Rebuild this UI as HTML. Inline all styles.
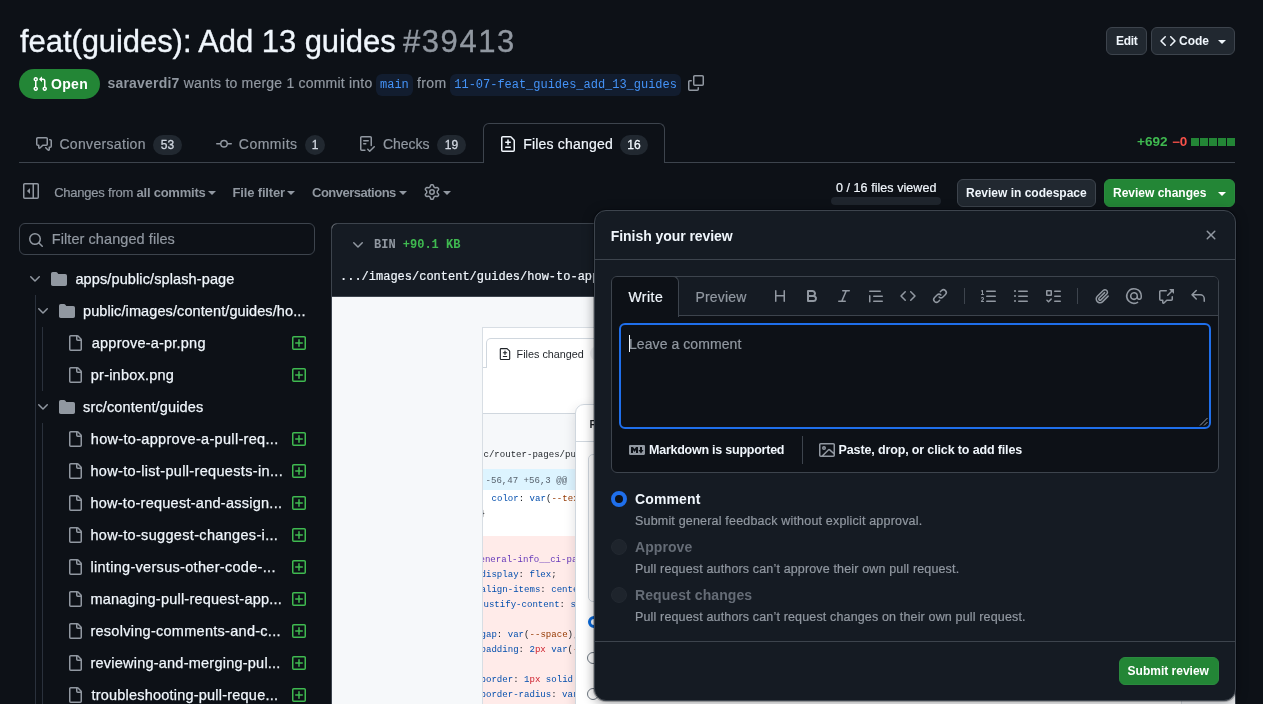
<!DOCTYPE html>
<html>
<head>
<meta charset="utf-8">
<title>feat(guides): Add 13 guides #39413</title>
<style>
*{box-sizing:border-box;margin:0;padding:0}
html,body{width:1263px;height:704px;overflow:hidden;background:#0d1117;filter:opacity(1);color:#f0f6fc;font-family:"Liberation Sans",sans-serif;font-size:14px}
.abs{position:absolute;white-space:nowrap}
.mono{font-family:"Liberation Mono",monospace}
svg{display:block;position:absolute;overflow:visible}
.muted{color:#9198a1}
.btn{position:absolute;height:28px;border:1px solid #3d444d;border-radius:6px;background:#212830;color:#f0f6fc;font-weight:bold;font-size:12px;line-height:26px;white-space:nowrap}
.counter{-webkit-text-stroke:0.3px;position:absolute;height:20px;border-radius:10px;background:#212830;color:#d1d7e0;font-size:12px;line-height:20px;text-align:center}
.tabtxt{-webkit-text-stroke:0.2px;position:absolute;font-size:14px;line-height:20px;top:134px;color:#9198a1;white-space:nowrap}
.tb{position:absolute;top:184px;font-size:13px;line-height:18px;color:#9198a1;white-space:nowrap}
.tb b{color:#9198a1}
.caret{position:absolute;width:0;height:0;border-left:4px solid transparent;border-right:4px solid transparent;border-top:4px solid #9198a1}
.row{position:absolute;left:0;height:32px;width:330px}
.row .nm{-webkit-text-stroke:0.25px;position:absolute;top:7px;font-size:14.5px;line-height:18px;color:#f0f6fc;white-space:nowrap}
</style>
</head>
<body>
<!-- ===== HEADER ===== -->
<div id="hdr">
  <div class="abs" id="title-a" style="-webkit-text-stroke:0.35px;left:20.0px;top:22px;font-size:31px;line-height:40px;color:#f0f6fc;letter-spacing:-0.069px">feat(guides): Add 13 guides</div>
  <div class="abs" id="title-b" style="-webkit-text-stroke:0.35px;left:403.0px;top:22px;font-size:31px;line-height:40px;color:#9198a1;letter-spacing:1.560px">#39413</div>
  <div class="btn" style="left:1106px;top:27px;width:41px"><span class="abs" id="x-edit" style="left:9.0px;top:0;letter-spacing:-0.333px">Edit</span></div>
  <div class="btn" id="b-code" style="left:1151px;top:27px;width:84px">
    <svg style="left:8px;top:5px" width="16" height="16" viewBox="0 0 16 16" fill="#f0f6fc"><path d="m11.28 3.22 4.25 4.25a.75.75 0 0 1 0 1.06l-4.25 4.25a.749.749 0 0 1-1.275-.326.749.749 0 0 1 .215-.734L13.94 8l-3.72-3.72a.749.749 0 0 1 .326-1.275.749.749 0 0 1 .734.215Zm-6.56 0a.751.751 0 0 1 1.042.018.751.751 0 0 1 .018 1.042L2.06 8l3.72 3.72a.749.749 0 0 1-.326 1.275.749.749 0 0 1-.734-.215L.47 8.530a.75.75 0 0 1 0-1.06Z"/></svg>
    <span class="abs" id="x-code" style="left:27.0px;top:0;letter-spacing:-0.000px">Code</span>
    <div class="caret" style="left:66px;top:12px;border-top-color:#f0f6fc"></div>
  </div>
  <!-- Open badge -->
  <div class="abs" id="open" style="left:19px;top:69px;width:81px;height:30px;border-radius:15px;background:#238636">
    <svg style="left:13px;top:7px" width="16" height="16" viewBox="0 0 16 16" fill="#fff"><path d="M1.5 3.25a2.25 2.25 0 1 1 3 2.122v5.256a2.251 2.251 0 1 1-1.500 0V5.372A2.250 2.250 0 0 1 1.500 3.250Zm5.677-.177L9.573.677A.25.25 0 0 1 10 .854V2.500h1A2.500 2.500 0 0 1 13.500 5v5.628a2.251 2.251 0 1 1-1.500 0V5a1 1 0 0 0-1-1h-1v1.646a.25.25 0 0 1-.427.177L7.177 3.427a.25.25 0 0 1 0-.354ZM3.750 2.500a.75.75 0 1 0 0 1.500.75.75 0 0 0 0-1.500Zm0 9.500a.75.75 0 1 0 0 1.500.75.75 0 0 0 0-1.500Zm8.250.75a.75.75 0 1 0 1.500 0 .75.75 0 0 0-1.500 0Z"/></svg>
    <span class="abs" id="x-open" style="left:32.0px;top:6px;font-size:14px;line-height:18px;font-weight:bold;color:#fff;letter-spacing:0.333px">Open</span>
  </div>
  <div class="abs muted" id="meta" style="-webkit-text-stroke:0.2px;left:107.4px;top:73px;font-size:14px;line-height:20px;letter-spacing:0.211px"><b style="-webkit-text-stroke:0">saraverdi7</b> wants to merge 1 commit into</div>
  <div class="abs mono" id="br1" style="left:376px;top:74px;height:21.5px;padding:0 4px;border-radius:6px;background:#121d2f;color:#4493f8;font-size:12px;line-height:23.4px;letter-spacing:0px">main</div>
  <div class="abs muted" id="from" style="-webkit-text-stroke:0.2px;left:417.0px;top:73px;font-size:14px;line-height:20px;letter-spacing:0.402px">from</div>
  <div class="abs mono" id="br2" style="left:450px;top:74px;height:21.5px;padding:0 4.3px;border-radius:6px;background:#121d2f;color:#4493f8;font-size:12px;line-height:23.4px;letter-spacing:-0.021px">11-07-feat_guides_add_13_guides</div>
  <svg id="copy" style="left:688px;top:75px" width="16" height="16" viewBox="0 0 16 16" fill="#9198a1"><path d="M0 6.750C0 5.784.784 5 1.750 5h1.500a.75.75 0 0 1 0 1.500h-1.500a.25.25 0 0 0-.25.25v7.500c0 .138.112.25.25.25h7.500a.25.25 0 0 0 .25-.25v-1.500a.75.75 0 0 1 1.500 0v1.500A1.750 1.750 0 0 1 9.250 16h-7.500A1.750 1.750 0 0 1 0 14.250Z"/><path d="M5 1.750C5 .784 5.784 0 6.750 0h7.500C15.216 0 16 .784 16 1.750v7.500A1.750 1.750 0 0 1 14.250 11h-7.500A1.750 1.750 0 0 1 5 9.250Zm1.750-.25a.25.25 0 0 0-.25.25v7.500c0 .138.112.25.25.25h7.500a.25.25 0 0 0 .25-.25v-7.500a.25.25 0 0 0-.25-.25Z"/></svg>
</div>

<!-- ===== TABS ===== -->
<div id="tabs">
  <div class="abs" style="left:19px;top:162px;width:1216px;height:1px;background:#3d444d"></div>
  <svg style="left:36px;top:136px" width="16" height="16" viewBox="0 0 16 16" fill="#9198a1"><path d="M1.750 1h8.500c.966 0 1.750.784 1.750 1.750v5.500A1.750 1.750 0 0 1 10.250 10H7.061l-2.574 2.573A1.458 1.458 0 0 1 2 11.543V10h-.25A1.750 1.750 0 0 1 0 8.250v-5.500C0 1.784.784 1 1.750 1ZM1.500 2.750v5.500c0 .138.112.25.25.25h1a.75.75 0 0 1 .75.75v2.190l2.720-2.720a.749.749 0 0 1 .53-.22h3.500a.25.25 0 0 0 .25-.25v-5.500a.25.25 0 0 0-.25-.25h-8.500a.25.25 0 0 0-.25.25Zm13 2a.25.25 0 0 0-.25-.25h-.5a.75.75 0 0 1 0-1.500h.5c.966 0 1.750.784 1.750 1.750v5.500A1.750 1.750 0 0 1 14.250 12H14v1.543a1.458 1.458 0 0 1-2.487 1.030L9.220 12.280a.749.749 0 0 1 .326-1.275.749.749 0 0 1 .734.215l2.220 2.220v-2.190a.75.75 0 0 1 .75-.75h1a.25.25 0 0 0 .25-.25Z"/></svg>
  <div class="tabtxt" id="t1" style="left:59.4px;letter-spacing:0.329px">Conversation</div>
  <div class="counter" style="left:153px;top:135px;width:29px">53</div>
  <svg style="left:216px;top:136px" width="16" height="16" viewBox="0 0 16 16" fill="#9198a1"><path d="M11.930 8.500a4.002 4.002 0 0 1-7.860 0H.750a.75.75 0 0 1 0-1.500h3.320a4.002 4.002 0 0 1 7.860 0h3.320a.75.75 0 0 1 0 1.500Zm-1.430-.75a2.500 2.500 0 1 0-5 0 2.500 2.500 0 0 0 5 0Z"/></svg>
  <div class="tabtxt" id="t2" style="left:238.8px;letter-spacing:0.500px">Commits</div>
  <div class="counter" style="left:305px;top:135px;width:20px">1</div>
  <svg style="left:359px;top:136px" width="16" height="16" viewBox="0 0 16 16" fill="#9198a1"><path d="M2.500 1.750v11.500c0 .138.112.25.25.25h3.170a.75.75 0 0 1 0 1.500H2.750A1.750 1.750 0 0 1 1 13.250V1.750C1 .784 1.784 0 2.750 0h8.500C12.216 0 13 .784 13 1.750v7.736a.75.75 0 0 1-1.500 0V1.750a.25.25 0 0 0-.25-.25h-8.500a.25.25 0 0 0-.25.250Zm13.274 9.537v-.001l-4.557 4.450a.75.75 0 0 1-1.055-.008l-1.943-1.950a.75.75 0 0 1 1.062-1.058l1.419 1.425 4.026-3.932a.75.75 0 1 1 1.048 1.074ZM4.750 4h4.500a.75.75 0 0 1 0 1.500h-4.500a.75.75 0 0 1 0-1.500ZM4 7.750A.75.75 0 0 1 4.750 7h2a.75.75 0 0 1 0 1.500h-2A.75.75 0 0 1 4 7.750Z"/></svg>
  <div class="tabtxt" id="t3" style="left:383.0px;letter-spacing:-0.040px">Checks</div>
  <div class="counter" style="left:437px;top:135px;width:29px">19</div>
  <!-- selected tab -->
  <div class="abs" id="seltab" style="left:483px;top:123px;width:182px;height:40px;border:1px solid #3d444d;border-bottom:none;border-radius:6px 6px 0 0;background:#0d1117"></div>
  <svg style="left:500px;top:136px" width="16" height="16" viewBox="0 0 16 16" fill="#f0f6fc"><path d="M1 1.750C1 .784 1.784 0 2.750 0h7.586c.464 0 .909.184 1.237.513l2.914 2.914c.329.328.513.773.513 1.237v9.586A1.750 1.750 0 0 1 13.250 16H2.750A1.750 1.750 0 0 1 1 14.250Zm1.750-.25a.25.25 0 0 0-.25.25v12.500c0 .138.112.25.25.25h10.500a.25.25 0 0 0 .25-.25V4.664a.25.25 0 0 0-.073-.177l-2.914-2.914a.25.25 0 0 0-.177-.073ZM8 3.250a.75.75 0 0 1 .75.75v1.500h1.500a.75.75 0 0 1 0 1.500h-1.500v1.500a.75.75 0 0 1-1.500 0V7h-1.500a.75.75 0 0 1 0-1.500h1.500V4A.75.75 0 0 1 8 3.250Zm-3 8a.75.75 0 0 1 .75-.75h4.500a.75.75 0 0 1 0 1.500h-4.500a.75.75 0 0 1-.75-.75Z"/></svg>
  <div class="tabtxt" id="t4" style="left:523.2px;color:#f0f6fc;letter-spacing:0.201px">Files changed</div>
  <div class="counter" style="left:620px;top:135px;width:28px;color:#f0f6fc">16</div>
  <!-- diffstat -->
  <div class="abs" id="dsp" style="left:1136.5px;top:133px;font-size:12px;line-height:18px;font-weight:bold;color:#3fb950;transform:scaleX(1.13);transform-origin:0 0">+692</div>
  <div class="abs" id="dsm" style="left:1171.5px;top:133px;font-size:12px;line-height:18px;font-weight:bold;color:#f85149;transform:scaleX(1.12);transform-origin:0 0">&minus;0</div>
  <div class="abs" style="left:1191px;top:138px;width:8px;height:8px;background:#238636;box-shadow:9px 0 0 #238636,18px 0 0 #238636,27px 0 0 #238636,36px 0 0 #238636"></div>
</div>

<!-- ===== TOOLBAR ===== -->
<div id="toolbar">
  <svg style="left:23px;top:183px" width="16" height="16" viewBox="0 0 16 16" fill="#9198a1"><path d="M4.177 7.823 6.573 5.427A.25.25 0 0 1 7 5.604v4.792a.25.25 0 0 1-.427.177L4.177 8.177a.25.25 0 0 1 0-.354Z"/><path d="M1.750 0h12.500C15.216 0 16 .784 16 1.750v12.500A1.750 1.750 0 0 1 14.250 16H1.750A1.750 1.750 0 0 1 0 14.250V1.750C0 .784.784 0 1.750 0ZM1.500 1.750v12.500c0 .138.112.25.25.25H9.500v-13H1.750a.25.25 0 0 0-.25.25ZM11 14.500h3.250a.25.25 0 0 0 .25-.25V1.750a.25.25 0 0 0-.25-.25H11Z"/></svg>
  <div class="tb" id="tb1" style="left:54.2px;letter-spacing:-0.228px"><span style="-webkit-text-stroke:0.2px">Changes from </span><b>all commits</b></div>
  <div class="caret" style="left:208px;top:191px"></div>
  <div class="tb" id="tb2" style="left:232.4px;letter-spacing:-0.140px"><b>File filter</b></div>
  <div class="caret" style="left:287px;top:191px"></div>
  <div class="tb" id="tb3" style="left:312.0px;letter-spacing:-0.500px"><b>Conversations</b></div>
  <div class="caret" style="left:399px;top:191px"></div>
  <svg style="left:424px;top:184px" width="16" height="16" viewBox="0 0 16 16" fill="#9198a1"><path d="M8 0a8.200 8.200 0 0 1 .701.031C9.444.095 9.990.645 10.160 1.290l.288 1.107c.018.066.079.158.212.224.231.114.454.243.668.386.123.082.233.090.299.071l1.103-.303c.644-.176 1.392.021 1.820.630.270.385.506.792.704 1.218.315.675.111 1.422-.364 1.891l-.814.806c-.049.048-.098.147-.088.294.016.257.016.515 0 .772-.010.147.038.246.088.294l.814.806c.475.469.679 1.216.364 1.891a7.977 7.977 0 0 1-.704 1.217c-.428.610-1.176.807-1.820.630l-1.102-.302c-.067-.019-.177-.011-.300.071a5.909 5.909 0 0 1-.668.386c-.133.066-.194.158-.211.224l-.290 1.106c-.168.646-.715 1.196-1.458 1.260a8.006 8.006 0 0 1-1.402 0c-.743-.064-1.289-.614-1.458-1.260l-.289-1.106c-.018-.066-.079-.158-.212-.224a5.738 5.738 0 0 1-.668-.386c-.123-.082-.233-.090-.299-.071l-1.103.303c-.644.176-1.392-.021-1.820-.630a8.120 8.120 0 0 1-.704-1.218c-.315-.675-.111-1.422.363-1.891l.815-.806c.050-.048.098-.147.088-.294a6.214 6.214 0 0 1 0-.772c.010-.147-.038-.246-.088-.294l-.815-.806C.635 6.045.431 5.298.746 4.623a7.920 7.920 0 0 1 .704-1.217c.428-.610 1.176-.807 1.820-.630l1.102.302c.067.019.177.011.300-.071.214-.143.437-.272.668-.386.133-.066.194-.158.211-.224l.290-1.106C6.009.645 6.556.095 7.299.030 7.530.010 7.764 0 8 0Zm-.571 1.525c-.036.003-.108.036-.137.146l-.289 1.105c-.147.561-.549.967-.998 1.189-.173.086-.340.183-.500.290-.417.278-.970.423-1.529.270l-1.103-.303c-.109-.030-.175.016-.195.045-.220.312-.412.644-.573.990-.014.031-.021.110.059.190l.815.806c.411.406.562.957.530 1.456a4.709 4.709 0 0 0 0 .582c.032.499-.119 1.050-.530 1.456l-.815.806c-.081.080-.073.159-.059.190.162.346.353.677.573.989.020.030.085.076.195.046l1.102-.303c.560-.153 1.113-.008 1.530.270.161.107.328.204.501.290.447.222.850.629.997 1.189l.289 1.105c.029.109.101.143.137.146a6.600 6.600 0 0 0 1.142 0c.036-.003.108-.036.137-.146l.289-1.105c.147-.561.549-.967.998-1.189.173-.086.340-.183.500-.290.417-.278.970-.423 1.529-.270l1.103.303c.109.029.175-.016.195-.045.220-.313.411-.644.573-.990.014-.031.021-.110-.059-.190l-.815-.806c-.411-.406-.562-.957-.530-1.456a4.709 4.709 0 0 0 0-.582c-.032-.499.119-1.050.530-1.456l.815-.806c.081-.080.073-.159.059-.190a6.464 6.464 0 0 0-.573-.989c-.020-.030-.085-.076-.195-.046l-1.102.303c-.560.153-1.113.008-1.530-.270a4.440 4.440 0 0 0-.501-.290c-.447-.222-.850-.629-.997-1.189l-.289-1.105c-.029-.110-.101-.143-.137-.146a6.600 6.600 0 0 0-1.142 0ZM11 8a3 3 0 1 1-6 0 3 3 0 0 1 6 0ZM9.500 8a1.500 1.500 0 1 0-3.001.001A1.500 1.500 0 0 0 9.500 8Z"/></svg>
  <div class="caret" style="left:443px;top:191px"></div>
  <div class="abs" id="fv" style="-webkit-text-stroke:0.2px;left:836.0px;top:179px;font-size:12.5px;line-height:18px;color:#f0f6fc;letter-spacing:0.055px">0 / 16 files viewed</div>
  <div class="abs" style="left:831px;top:197px;width:110px;height:8px;border-radius:4px;background:#1f252d"></div>
  <div class="btn" style="left:957px;top:179px;width:139px"><span class="abs" id="x-rc" style="left:8.0px;top:0;letter-spacing:0.000px">Review in codespace</span></div>
  <div class="btn" id="b-rv" style="left:1104px;top:179px;width:131px;background:#238636;border-color:#2a8a3e;color:#fff"><span class="abs" id="x-rv" style="left:8.0px;top:0;letter-spacing:0.000px">Review changes</span><div class="caret" style="left:113px;top:12px;border-top-color:#fff"></div></div>
</div>

<!-- ===== FILE TREE ===== -->
<div id="tree">
  <div class="abs" style="left:19px;top:223px;width:296px;height:32px;border:1px solid #3d444d;border-radius:6px;background:#0d1117"></div>
  <svg style="left:27.5px;top:231.5px" width="16" height="16" viewBox="0 0 16 16" fill="#9198a1"><path d="M10.680 11.740a6 6 0 0 1-7.922-8.982 6 6 0 0 1 8.982 7.922l3.040 3.040a.749.749 0 0 1-.326 1.275.749.749 0 0 1-.734-.215ZM11.500 7a4.499 4.499 0 1 0-8.997 0A4.499 4.499 0 0 0 11.500 7Z"/></svg>
  <div class="abs" id="flt" style="-webkit-text-stroke:0.2px;left:51.8px;top:229px;font-size:14.5px;line-height:20px;color:#9198a1;letter-spacing:0.072px">Filter changed files</div>
  <div class="abs" style="left:35px;top:295px;width:1px;height:420px;background:#2a313c"></div>
  <div class="abs" style="left:42px;top:327px;width:1px;height:64px;background:#2a313c"></div>
  <div class="abs" style="left:42px;top:423px;width:1px;height:290px;background:#2a313c"></div>
  <div class="row" style="top:263px"><svg style="left:27px;top:8px" width="16" height="16" viewBox="0 0 16 16" fill="#9198a1"><path d="M12.780 5.220a.749.749 0 0 1 0 1.060l-4.250 4.250a.749.749 0 0 1-1.060 0L3.220 6.280a.749.749 0 1 1 1.060-1.060L8 8.939l3.720-3.719a.749.749 0 0 1 1.060 0Z"/></svg><svg style="left:51px;top:8px" width="16" height="16" viewBox="0 0 16 16" fill="#9198a1"><path d="M1.750 1A1.750 1.750 0 0 0 0 2.750v10.500C0 14.216.784 15 1.750 15h12.500A1.750 1.750 0 0 0 16 13.250v-8.500A1.750 1.750 0 0 0 14.250 3H7.500a.25.25 0 0 1-.2-.1l-.9-1.200C6.070 1.260 5.550 1 5 1H1.750Z"/></svg><span class="nm" id="r0" style="left:75.4px;letter-spacing:0.117px">apps/public/splash-page</span></div>
  <div class="row" style="top:295px"><svg style="left:35px;top:8px" width="16" height="16" viewBox="0 0 16 16" fill="#9198a1"><path d="M12.780 5.220a.749.749 0 0 1 0 1.060l-4.250 4.250a.749.749 0 0 1-1.060 0L3.220 6.280a.749.749 0 1 1 1.060-1.060L8 8.939l3.720-3.719a.749.749 0 0 1 1.060 0Z"/></svg><svg style="left:59px;top:8px" width="16" height="16" viewBox="0 0 16 16" fill="#9198a1"><path d="M1.750 1A1.750 1.750 0 0 0 0 2.750v10.500C0 14.216.784 15 1.750 15h12.500A1.750 1.750 0 0 0 16 13.250v-8.500A1.750 1.750 0 0 0 14.250 3H7.500a.25.25 0 0 1-.2-.1l-.9-1.200C6.070 1.260 5.550 1 5 1H1.750Z"/></svg><span class="nm" id="r1" style="left:83.0px;letter-spacing:0.097px">public/images/content/guides/ho...</span></div>
  <div class="row" style="top:327px"><svg style="left:67px;top:8px" width="16" height="16" viewBox="0 0 16 16" fill="#9198a1"><path d="M2 1.750C2 .784 2.784 0 3.750 0h6.586c.464 0 .909.184 1.237.513l2.914 2.914c.329.328.513.773.513 1.237v9.586A1.750 1.750 0 0 1 13.250 16h-9.500A1.750 1.750 0 0 1 2 14.250Zm1.750-.25a.25.25 0 0 0-.25.25v12.500c0 .138.112.25.25.25h9.500a.25.25 0 0 0 .25-.25V6h-2.750A1.750 1.750 0 0 1 9 4.250V1.500Zm6.750.062V4.250c0 .138.112.25.25.25h2.688l-.011-.013-2.914-2.914-.013-.011Z"/></svg><span class="nm" id="r2" style="left:91.8px;letter-spacing:0.215px">approve-a-pr.png</span><svg style="left:291px;top:8px" width="16" height="16" viewBox="0 0 16 16" fill="#3fb950"><path d="M2.750 1h10.500c.966 0 1.750.784 1.750 1.750v10.500A1.750 1.750 0 0 1 13.250 15H2.750A1.750 1.750 0 0 1 1 13.250V2.750C1 1.784 1.784 1 2.750 1Zm10.500 1.500H2.750a.25.25 0 0 0-.25.25v10.500c0 .138.112.25.25.25h10.500a.25.25 0 0 0 .25-.25V2.750a.25.25 0 0 0-.25-.25ZM8 4a.75.75 0 0 1 .75.75v2.500h2.500a.75.75 0 0 1 0 1.500h-2.500v2.500a.75.75 0 0 1-1.500 0v-2.500h-2.500a.75.75 0 0 1 0-1.500h2.500v-2.500A.75.75 0 0 1 8 4Z"/></svg></div>
  <div class="row" style="top:359px"><svg style="left:67px;top:8px" width="16" height="16" viewBox="0 0 16 16" fill="#9198a1"><path d="M2 1.750C2 .784 2.784 0 3.750 0h6.586c.464 0 .909.184 1.237.513l2.914 2.914c.329.328.513.773.513 1.237v9.586A1.750 1.750 0 0 1 13.250 16h-9.500A1.750 1.750 0 0 1 2 14.250Zm1.750-.25a.25.25 0 0 0-.25.25v12.500c0 .138.112.25.25.25h9.500a.25.25 0 0 0 .25-.25V6h-2.750A1.750 1.750 0 0 1 9 4.250V1.500Zm6.750.062V4.250c0 .138.112.25.25.25h2.688l-.011-.013-2.914-2.914-.013-.011Z"/></svg><span class="nm" id="r3" style="left:90.8px;letter-spacing:0.220px">pr-inbox.png</span><svg style="left:291px;top:8px" width="16" height="16" viewBox="0 0 16 16" fill="#3fb950"><path d="M2.750 1h10.500c.966 0 1.750.784 1.750 1.750v10.500A1.750 1.750 0 0 1 13.250 15H2.750A1.750 1.750 0 0 1 1 13.250V2.750C1 1.784 1.784 1 2.750 1Zm10.500 1.500H2.750a.25.25 0 0 0-.25.25v10.500c0 .138.112.25.25.25h10.500a.25.25 0 0 0 .25-.25V2.750a.25.25 0 0 0-.25-.25ZM8 4a.75.75 0 0 1 .75.75v2.500h2.500a.75.75 0 0 1 0 1.500h-2.500v2.500a.75.75 0 0 1-1.500 0v-2.500h-2.500a.75.75 0 0 1 0-1.500h2.500v-2.500A.75.75 0 0 1 8 4Z"/></svg></div>
  <div class="row" style="top:391px"><svg style="left:35px;top:8px" width="16" height="16" viewBox="0 0 16 16" fill="#9198a1"><path d="M12.780 5.220a.749.749 0 0 1 0 1.060l-4.250 4.250a.749.749 0 0 1-1.060 0L3.220 6.280a.749.749 0 1 1 1.060-1.060L8 8.939l3.720-3.719a.749.749 0 0 1 1.060 0Z"/></svg><svg style="left:59px;top:8px" width="16" height="16" viewBox="0 0 16 16" fill="#9198a1"><path d="M1.750 1A1.750 1.750 0 0 0 0 2.750v10.500C0 14.216.784 15 1.750 15h12.500A1.750 1.750 0 0 0 16 13.250v-8.500A1.750 1.750 0 0 0 14.250 3H7.500a.25.25 0 0 1-.2-.1l-.9-1.200C6.070 1.260 5.550 1 5 1H1.750Z"/></svg><span class="nm" id="r4" style="left:83.0px;letter-spacing:0.152px">src/content/guides</span></div>
  <div class="row" style="top:423px"><svg style="left:67px;top:8px" width="16" height="16" viewBox="0 0 16 16" fill="#9198a1"><path d="M2 1.750C2 .784 2.784 0 3.750 0h6.586c.464 0 .909.184 1.237.513l2.914 2.914c.329.328.513.773.513 1.237v9.586A1.750 1.750 0 0 1 13.250 16h-9.500A1.750 1.750 0 0 1 2 14.250Zm1.750-.25a.25.25 0 0 0-.25.25v12.500c0 .138.112.25.25.25h9.500a.25.25 0 0 0 .25-.25V6h-2.750A1.750 1.750 0 0 1 9 4.250V1.500Zm6.750.062V4.250c0 .138.112.25.25.25h2.688l-.011-.013-2.914-2.914-.013-.011Z"/></svg><span class="nm" id="r5" style="left:90.8px;letter-spacing:0.314px">how-to-approve-a-pull-req...</span><svg style="left:291px;top:8px" width="16" height="16" viewBox="0 0 16 16" fill="#3fb950"><path d="M2.750 1h10.500c.966 0 1.750.784 1.750 1.750v10.500A1.750 1.750 0 0 1 13.250 15H2.750A1.750 1.750 0 0 1 1 13.250V2.750C1 1.784 1.784 1 2.750 1Zm10.500 1.500H2.750a.25.25 0 0 0-.25.25v10.500c0 .138.112.25.25.25h10.500a.25.25 0 0 0 .25-.25V2.750a.25.25 0 0 0-.25-.25ZM8 4a.75.75 0 0 1 .75.75v2.500h2.500a.75.75 0 0 1 0 1.500h-2.500v2.500a.75.75 0 0 1-1.500 0v-2.500h-2.500a.75.75 0 0 1 0-1.500h2.500v-2.500A.75.75 0 0 1 8 4Z"/></svg></div>
  <div class="row" style="top:455px"><svg style="left:67px;top:8px" width="16" height="16" viewBox="0 0 16 16" fill="#9198a1"><path d="M2 1.750C2 .784 2.784 0 3.750 0h6.586c.464 0 .909.184 1.237.513l2.914 2.914c.329.328.513.773.513 1.237v9.586A1.750 1.750 0 0 1 13.250 16h-9.500A1.750 1.750 0 0 1 2 14.250Zm1.750-.25a.25.25 0 0 0-.25.25v12.500c0 .138.112.25.25.25h9.500a.25.25 0 0 0 .25-.25V6h-2.750A1.750 1.750 0 0 1 9 4.250V1.500Zm6.750.062V4.250c0 .138.112.25.25.25h2.688l-.011-.013-2.914-2.914-.013-.011Z"/></svg><span class="nm" id="r6" style="left:90.4px;letter-spacing:0.341px">how-to-list-pull-requests-in...</span><svg style="left:291px;top:8px" width="16" height="16" viewBox="0 0 16 16" fill="#3fb950"><path d="M2.750 1h10.500c.966 0 1.750.784 1.750 1.750v10.500A1.750 1.750 0 0 1 13.250 15H2.750A1.750 1.750 0 0 1 1 13.250V2.750C1 1.784 1.784 1 2.750 1Zm10.500 1.500H2.750a.25.25 0 0 0-.25.25v10.500c0 .138.112.25.25.25h10.500a.25.25 0 0 0 .25-.25V2.750a.25.25 0 0 0-.25-.25ZM8 4a.75.75 0 0 1 .75.75v2.500h2.500a.75.75 0 0 1 0 1.500h-2.500v2.500a.75.75 0 0 1-1.500 0v-2.500h-2.500a.75.75 0 0 1 0-1.500h2.500v-2.500A.75.75 0 0 1 8 4Z"/></svg></div>
  <div class="row" style="top:487px"><svg style="left:67px;top:8px" width="16" height="16" viewBox="0 0 16 16" fill="#9198a1"><path d="M2 1.750C2 .784 2.784 0 3.750 0h6.586c.464 0 .909.184 1.237.513l2.914 2.914c.329.328.513.773.513 1.237v9.586A1.750 1.750 0 0 1 13.250 16h-9.500A1.750 1.750 0 0 1 2 14.250Zm1.750-.25a.25.25 0 0 0-.25.25v12.500c0 .138.112.25.25.25h9.500a.25.25 0 0 0 .25-.25V6h-2.750A1.750 1.750 0 0 1 9 4.250V1.500Zm6.750.062V4.250c0 .138.112.25.25.25h2.688l-.011-.013-2.914-2.914-.013-.011Z"/></svg><span class="nm" id="r7" style="left:90.4px;letter-spacing:0.260px">how-to-request-and-assign...</span><svg style="left:291px;top:8px" width="16" height="16" viewBox="0 0 16 16" fill="#3fb950"><path d="M2.750 1h10.500c.966 0 1.750.784 1.750 1.750v10.500A1.750 1.750 0 0 1 13.250 15H2.750A1.750 1.750 0 0 1 1 13.250V2.750C1 1.784 1.784 1 2.750 1Zm10.500 1.500H2.750a.25.25 0 0 0-.25.25v10.500c0 .138.112.25.25.25h10.500a.25.25 0 0 0 .25-.25V2.750a.25.25 0 0 0-.25-.25ZM8 4a.75.75 0 0 1 .75.75v2.500h2.500a.75.75 0 0 1 0 1.500h-2.500v2.500a.75.75 0 0 1-1.500 0v-2.500h-2.500a.75.75 0 0 1 0-1.500h2.500v-2.500A.75.75 0 0 1 8 4Z"/></svg></div>
  <div class="row" style="top:519px"><svg style="left:67px;top:8px" width="16" height="16" viewBox="0 0 16 16" fill="#9198a1"><path d="M2 1.750C2 .784 2.784 0 3.750 0h6.586c.464 0 .909.184 1.237.513l2.914 2.914c.329.328.513.773.513 1.237v9.586A1.750 1.750 0 0 1 13.250 16h-9.500A1.750 1.750 0 0 1 2 14.250Zm1.750-.25a.25.25 0 0 0-.25.25v12.500c0 .138.112.25.25.25h9.500a.25.25 0 0 0 .25-.25V6h-2.750A1.750 1.750 0 0 1 9 4.250V1.500Zm6.750.062V4.250c0 .138.112.25.25.25h2.688l-.011-.013-2.914-2.914-.013-.011Z"/></svg><span class="nm" id="r8" style="left:90.4px;letter-spacing:0.330px">how-to-suggest-changes-i...</span><svg style="left:291px;top:8px" width="16" height="16" viewBox="0 0 16 16" fill="#3fb950"><path d="M2.750 1h10.500c.966 0 1.750.784 1.750 1.750v10.500A1.750 1.750 0 0 1 13.250 15H2.750A1.750 1.750 0 0 1 1 13.250V2.750C1 1.784 1.784 1 2.750 1Zm10.500 1.500H2.750a.25.25 0 0 0-.25.25v10.500c0 .138.112.25.25.25h10.500a.25.25 0 0 0 .25-.25V2.750a.25.25 0 0 0-.25-.25ZM8 4a.75.75 0 0 1 .75.75v2.500h2.500a.75.75 0 0 1 0 1.500h-2.500v2.500a.75.75 0 0 1-1.500 0v-2.500h-2.500a.75.75 0 0 1 0-1.500h2.500v-2.500A.75.75 0 0 1 8 4Z"/></svg></div>
  <div class="row" style="top:551px"><svg style="left:67px;top:8px" width="16" height="16" viewBox="0 0 16 16" fill="#9198a1"><path d="M2 1.750C2 .784 2.784 0 3.750 0h6.586c.464 0 .909.184 1.237.513l2.914 2.914c.329.328.513.773.513 1.237v9.586A1.750 1.750 0 0 1 13.250 16h-9.500A1.750 1.750 0 0 1 2 14.250Zm1.750-.25a.25.25 0 0 0-.25.25v12.500c0 .138.112.25.25.25h9.500a.25.25 0 0 0 .25-.25V6h-2.750A1.750 1.750 0 0 1 9 4.250V1.500Zm6.750.062V4.250c0 .138.112.25.25.25h2.688l-.011-.013-2.914-2.914-.013-.011Z"/></svg><span class="nm" id="r9" style="left:90.4px;letter-spacing:0.306px">linting-versus-other-code-...</span><svg style="left:291px;top:8px" width="16" height="16" viewBox="0 0 16 16" fill="#3fb950"><path d="M2.750 1h10.500c.966 0 1.750.784 1.750 1.750v10.500A1.750 1.750 0 0 1 13.250 15H2.750A1.750 1.750 0 0 1 1 13.250V2.750C1 1.784 1.784 1 2.750 1Zm10.500 1.500H2.750a.25.25 0 0 0-.25.25v10.500c0 .138.112.25.25.25h10.500a.25.25 0 0 0 .25-.25V2.750a.25.25 0 0 0-.25-.25ZM8 4a.75.75 0 0 1 .75.75v2.500h2.500a.75.75 0 0 1 0 1.500h-2.500v2.500a.75.75 0 0 1-1.500 0v-2.500h-2.500a.75.75 0 0 1 0-1.500h2.500v-2.500A.75.75 0 0 1 8 4Z"/></svg></div>
  <div class="row" style="top:583px"><svg style="left:67px;top:8px" width="16" height="16" viewBox="0 0 16 16" fill="#9198a1"><path d="M2 1.750C2 .784 2.784 0 3.750 0h6.586c.464 0 .909.184 1.237.513l2.914 2.914c.329.328.513.773.513 1.237v9.586A1.750 1.750 0 0 1 13.250 16h-9.500A1.750 1.750 0 0 1 2 14.250Zm1.750-.25a.25.25 0 0 0-.25.25v12.500c0 .138.112.25.25.25h9.500a.25.25 0 0 0 .25-.25V6h-2.750A1.750 1.750 0 0 1 9 4.250V1.500Zm6.750.062V4.250c0 .138.112.25.25.25h2.688l-.011-.013-2.914-2.914-.013-.011Z"/></svg><span class="nm" id="r10" style="left:90.4px;letter-spacing:0.222px">managing-pull-request-app...</span><svg style="left:291px;top:8px" width="16" height="16" viewBox="0 0 16 16" fill="#3fb950"><path d="M2.750 1h10.500c.966 0 1.750.784 1.750 1.750v10.500A1.750 1.750 0 0 1 13.250 15H2.750A1.750 1.750 0 0 1 1 13.250V2.750C1 1.784 1.784 1 2.750 1Zm10.500 1.500H2.750a.25.25 0 0 0-.25.25v10.500c0 .138.112.25.25.25h10.500a.25.25 0 0 0 .25-.25V2.750a.25.25 0 0 0-.25-.25ZM8 4a.75.75 0 0 1 .75.75v2.500h2.500a.75.75 0 0 1 0 1.500h-2.500v2.500a.75.75 0 0 1-1.500 0v-2.500h-2.500a.75.75 0 0 1 0-1.500h2.500v-2.500A.75.75 0 0 1 8 4Z"/></svg></div>
  <div class="row" style="top:615px"><svg style="left:67px;top:8px" width="16" height="16" viewBox="0 0 16 16" fill="#9198a1"><path d="M2 1.750C2 .784 2.784 0 3.750 0h6.586c.464 0 .909.184 1.237.513l2.914 2.914c.329.328.513.773.513 1.237v9.586A1.750 1.750 0 0 1 13.250 16h-9.500A1.750 1.750 0 0 1 2 14.250Zm1.750-.25a.25.25 0 0 0-.25.25v12.500c0 .138.112.25.25.25h9.500a.25.25 0 0 0 .25-.25V6h-2.750A1.750 1.750 0 0 1 9 4.250V1.500Zm6.750.062V4.250c0 .138.112.25.25.25h2.688l-.011-.013-2.914-2.914-.013-.011Z"/></svg><span class="nm" id="r11" style="left:90.4px;letter-spacing:0.276px">resolving-comments-and-c...</span><svg style="left:291px;top:8px" width="16" height="16" viewBox="0 0 16 16" fill="#3fb950"><path d="M2.750 1h10.500c.966 0 1.750.784 1.750 1.750v10.500A1.750 1.750 0 0 1 13.250 15H2.750A1.750 1.750 0 0 1 1 13.250V2.750C1 1.784 1.784 1 2.750 1Zm10.500 1.500H2.750a.25.25 0 0 0-.25.25v10.500c0 .138.112.25.25.25h10.500a.25.25 0 0 0 .25-.25V2.750a.25.25 0 0 0-.25-.25ZM8 4a.75.75 0 0 1 .75.75v2.500h2.500a.75.75 0 0 1 0 1.500h-2.500v2.500a.75.75 0 0 1-1.500 0v-2.500h-2.500a.75.75 0 0 1 0-1.500h2.500v-2.500A.75.75 0 0 1 8 4Z"/></svg></div>
  <div class="row" style="top:647px"><svg style="left:67px;top:8px" width="16" height="16" viewBox="0 0 16 16" fill="#9198a1"><path d="M2 1.750C2 .784 2.784 0 3.750 0h6.586c.464 0 .909.184 1.237.513l2.914 2.914c.329.328.513.773.513 1.237v9.586A1.750 1.750 0 0 1 13.250 16h-9.500A1.750 1.750 0 0 1 2 14.250Zm1.750-.25a.25.25 0 0 0-.25.25v12.500c0 .138.112.25.25.25h9.500a.25.25 0 0 0 .25-.25V6h-2.750A1.750 1.750 0 0 1 9 4.250V1.500Zm6.750.062V4.250c0 .138.112.25.25.25h2.688l-.011-.013-2.914-2.914-.013-.011Z"/></svg><span class="nm" id="r12" style="left:90.4px;letter-spacing:0.231px">reviewing-and-merging-pul...</span><svg style="left:291px;top:8px" width="16" height="16" viewBox="0 0 16 16" fill="#3fb950"><path d="M2.750 1h10.500c.966 0 1.750.784 1.750 1.750v10.500A1.750 1.750 0 0 1 13.250 15H2.750A1.750 1.750 0 0 1 1 13.250V2.750C1 1.784 1.784 1 2.750 1Zm10.500 1.500H2.750a.25.25 0 0 0-.25.25v10.500c0 .138.112.25.25.25h10.500a.25.25 0 0 0 .25-.25V2.750a.25.25 0 0 0-.25-.25ZM8 4a.75.75 0 0 1 .75.75v2.500h2.500a.75.75 0 0 1 0 1.500h-2.500v2.500a.75.75 0 0 1-1.500 0v-2.500h-2.500a.75.75 0 0 1 0-1.500h2.500v-2.500A.75.75 0 0 1 8 4Z"/></svg></div>
  <div class="row" style="top:679px"><svg style="left:67px;top:8px" width="16" height="16" viewBox="0 0 16 16" fill="#9198a1"><path d="M2 1.750C2 .784 2.784 0 3.750 0h6.586c.464 0 .909.184 1.237.513l2.914 2.914c.329.328.513.773.513 1.237v9.586A1.750 1.750 0 0 1 13.250 16h-9.500A1.750 1.750 0 0 1 2 14.250Zm1.750-.25a.25.25 0 0 0-.25.25v12.500c0 .138.112.25.25.25h9.500a.25.25 0 0 0 .25-.25V6h-2.750A1.750 1.750 0 0 1 9 4.250V1.500Zm6.750.062V4.250c0 .138.112.25.25.25h2.688l-.011-.013-2.914-2.914-.013-.011Z"/></svg><span class="nm" id="r13" style="left:91.4px;letter-spacing:0.214px">troubleshooting-pull-reque...</span><svg style="left:291px;top:8px" width="16" height="16" viewBox="0 0 16 16" fill="#3fb950"><path d="M2.750 1h10.500c.966 0 1.750.784 1.750 1.750v10.500A1.750 1.750 0 0 1 13.250 15H2.750A1.750 1.750 0 0 1 1 13.250V2.750C1 1.784 1.784 1 2.750 1Zm10.500 1.500H2.750a.25.25 0 0 0-.25.25v10.500c0 .138.112.25.25.25h10.500a.25.25 0 0 0 .25-.25V2.750a.25.25 0 0 0-.25-.25ZM8 4a.75.75 0 0 1 .75.75v2.500h2.500a.75.75 0 0 1 0 1.500h-2.500v2.500a.75.75 0 0 1-1.500 0v-2.500h-2.500a.75.75 0 0 1 0-1.500h2.500v-2.500A.75.75 0 0 1 8 4Z"/></svg></div>
</div>

<!-- ===== DIFF PANEL ===== -->
<style>
#diff{position:absolute;left:331px;top:223px;width:905px;height:500px;border:1px solid #3d444d;border-radius:6px;background:#f6f8fa;overflow:hidden}
#dh{position:absolute;left:0;top:0;width:100%;height:73px;background:#151b23;border-bottom:1px solid #3d444d}
#shot{position:absolute;left:150px;top:103px;width:700px;height:420px;background:#fff;border:1px solid #d8dee4;overflow:hidden}
.cl{position:absolute;white-space:pre;font-family:"Liberation Mono",monospace;font-size:9.07px;line-height:15px;color:#1f2328}
</style>
<div id="diff">
  <div id="dh">
    <svg style="left:18px;top:13px" width="16" height="16" viewBox="0 0 16 16" fill="#9198a1"><path d="M12.780 5.220a.749.749 0 0 1 0 1.060l-4.250 4.250a.749.749 0 0 1-1.060 0L3.220 6.280a.749.749 0 1 1 1.060-1.060L8 8.939l3.720-3.719a.749.749 0 0 1 1.060 0Z"/></svg>
    <div class="abs mono" id="bin" style="left:42px;top:11px;font-size:12px;line-height:20px;font-weight:bold;color:#9198a1">BIN <span style="color:#3fb950">+90.1 KB</span></div>
    <div class="abs mono" id="pth" style="-webkit-text-stroke:0.2px;left:8px;top:43px;font-size:12px;line-height:20px;color:#f0f6fc">.../images/content/guides/how-to-approve-a-pull-request/approve-a-pr.png</div>
  </div>
  <div id="shot">
    <!-- tab -->
    <div class="abs" style="left:3px;top:10px;width:160px;height:30px;border:1px solid #d0d7de;border-bottom:none;border-radius:5px 5px 0 0;background:#fff"></div>
    <div class="abs" style="left:0;top:39px;width:4px;height:1px;background:#d0d7de"></div>
    <svg style="left:15.6px;top:20px" width="12" height="12" viewBox="0 0 16 16" fill="#1f2328"><path d="M1 1.750C1 .784 1.784 0 2.750 0h7.586c.464 0 .909.184 1.237.513l2.914 2.914c.329.328.513.773.513 1.237v9.586A1.750 1.750 0 0 1 13.250 16H2.750A1.750 1.750 0 0 1 1 14.250Zm1.750-.25a.25.25 0 0 0-.25.25v12.500c0 .138.112.25.25.25h10.500a.25.25 0 0 0 .25-.25V4.664a.25.25 0 0 0-.073-.177l-2.914-2.914a.25.25 0 0 0-.177-.073ZM8 3.250a.75.75 0 0 1 .75.75v1.500h1.500a.75.75 0 0 1 0 1.500h-1.500v1.500a.75.75 0 0 1-1.500 0V7h-1.500a.75.75 0 0 1 0-1.500h1.500V4A.75.75 0 0 1 8 3.250Zm-3 8a.75.75 0 0 1 .75-.75h4.500a.75.75 0 0 1 0 1.500h-4.500a.75.75 0 0 1-.75-.75Z"/></svg>
    <div class="abs" id="ifc" style="left:33.6px;top:18px;font-size:10.8px;line-height:16px;color:#1f2328">Files changed</div>
    <div class="abs" style="left:107px;top:18px;width:22px;height:15px;border-radius:8px;background:#eff1f3"></div>
    <!-- gray band -->
    <div class="abs" style="left:0;top:85px;width:700px;height:56px;background:#f6f8fa;border-top:1px solid #d0d7de"></div>
    <div class="cl" style="top:119px;left:-5px">rc/router-pages/pull-request-page/general-info</div>
    <!-- hunk -->
    <div class="abs" style="left:0;top:141px;width:700px;height:21px;background:#ddf4ff"></div>
    <div class="cl" style="top:145px;left:2.5px"><span style="color:#59636e">-56,47 +56,3 @@</span></div>
    <div class="cl" style="top:163px;left:8.5px"><span style="color:#0550ae">color</span>: <span style="color:#0550ae">var</span>(<span style="color:#953800">--text-primary</span>);</div>
    <div class="cl" style="top:178px;left:-3px">}</div>
    <!-- red -->
    <div class="abs" style="left:0;top:208px;width:700px;height:220px;background:#ffebe9"></div>
    <div class="cl" style="top:224px;left:-9px"><span style="color:#6639ba">general-info__ci-pages-wrapper {</span></div>
    <div class="cl" style="top:239px;left:-2.5px"><span style="color:#0550ae">display</span>: <span style="color:#0550ae">flex</span>;</div>
    <div class="cl" style="top:254px;left:-2.5px"><span style="color:#0550ae">align-items</span>: <span style="color:#0550ae">center</span>;</div>
    <div class="cl" style="top:269px;left:-5px"><span style="color:#0550ae">justify-content</span>: <span style="color:#0550ae">space-between</span>;</div>
    <div class="cl" style="top:299px;left:-2.5px"><span style="color:#0550ae">gap</span>: <span style="color:#0550ae">var</span>(<span style="color:#953800">--space</span>);</div>
    <div class="cl" style="top:314px;left:-2.5px"><span style="color:#0550ae">padding</span>: <span style="color:#0550ae">2</span><span style="color:#cf222e">px</span> <span style="color:#0550ae">var</span>(<span style="color:#953800">--space</span>);</div>
    <div class="cl" style="top:344px;left:-2.5px"><span style="color:#0550ae">border</span>: <span style="color:#0550ae">1</span><span style="color:#cf222e">px</span> <span style="color:#0550ae">solid</span> <span style="color:#0550ae">var</span>(</div>
    <div class="cl" style="top:359px;left:-2.5px"><span style="color:#0550ae">border-radius</span>: <span style="color:#0550ae">var</span>(</div>
    <!-- nested popover -->
    <div class="abs" id="npop" style="left:92px;top:76px;width:700px;height:400px;background:#fff;border:1px solid #d0d7de;border-radius:9px;box-shadow:0 4px 12px rgba(31,35,40,.15)">
      <div class="abs" style="left:13.5px;top:11px;font-size:10.6px;font-weight:bold;line-height:16px;color:#1f2328">Finish your review</div>
      <div class="abs" style="left:0;top:36px;width:500px;height:1px;background:#d0d7de"></div>
      <div class="abs" style="left:12px;top:49px;width:460px;height:148px;border:1px solid #d0d7de;border-radius:5px;background:#fff"></div>
      <div class="abs" style="left:12px;top:211px;width:12px;height:12px;border-radius:50%;border:3.5px solid #0969da;background:#fff"></div>
      <div class="abs" style="left:11px;top:247px;width:12px;height:12px;border-radius:50%;border:1px solid #6e7781;background:#fff"></div>
      <div class="abs" style="left:11px;top:283px;width:12px;height:12px;border-radius:50%;border:1px solid #6e7781;background:#fff"></div>
    </div>
  </div>
</div>

<!-- ===== REVIEW POPOVER ===== -->
<style>
#pop{position:absolute;left:594px;top:210px;width:642px;height:491px;border:1px solid #3d444d;border-radius:12px;background:#151b23;box-shadow:0 0 0 1px rgba(1,4,9,.25),0 2px 12px rgba(1,4,9,.4)}
#pop .d{-webkit-text-stroke:0.2px;position:absolute;font-size:12.5px;line-height:18px;color:#9198a1;white-space:nowrap;left:39px}
#pop .t{position:absolute;font-size:14px;line-height:20px;font-weight:bold;white-space:nowrap;left:39px}
.rad{position:absolute;width:16px;height:16px;border-radius:50%;left:15px}
</style>
<div id="pop">
<div style="position:absolute;left:1px;top:1px;width:0;height:0">
  <div class="abs" id="p-title" style="left:14.8px;top:14px;font-size:14px;line-height:20px;font-weight:bold;color:#f0f6fc;letter-spacing:-0.059px">Finish your review</div>
  <svg style="left:607px;top:15px" width="16" height="16" viewBox="0 0 16 16" fill="#9198a1"><path d="M3.720 3.720a.75.75 0 0 1 1.060 0L8 6.940l3.220-3.220a.749.749 0 0 1 1.275.326.749.749 0 0 1-.215.734L9.060 8l3.220 3.220a.749.749 0 0 1-.326 1.275.749.749 0 0 1-.734-.215L8 9.060l-3.220 3.220a.751.751 0 0 1-1.042-.018.751.751 0 0 1-.018-1.042L6.940 8 3.720 4.780a.75.75 0 0 1 0-1.060Z"/></svg>
  <div class="abs" style="left:-1px;top:47px;width:640px;height:1px;background:#3d444d"></div>
  <!-- editor -->
  <div class="abs" id="ed" style="left:15px;top:64px;width:608px;height:197px;border:1px solid #3d444d;border-radius:6px;background:#0d1117;overflow:hidden">
    <div class="abs" style="left:0;top:0;width:606px;height:39px;background:#151b23;border-bottom:1px solid #3d444d"></div>
    <div class="abs" style="left:-1px;top:-1px;width:68px;height:41px;background:#0d1117;border:1px solid #3d444d;border-bottom:none;border-radius:6px 6px 0 0"></div>
  </div>
  <div class="abs" id="p-write" style="-webkit-text-stroke:0.2px;left:32.4px;top:75px;font-size:14px;line-height:20px;color:#f0f6fc;letter-spacing:0.500px">Write</div>
  <div class="abs" id="p-prev" style="-webkit-text-stroke:0.2px;left:99.4px;top:75px;font-size:14px;line-height:20px;color:#9198a1;letter-spacing:0.199px">Preview</div>
    <svg style="left:176px;top:76px" width="16" height="16" viewBox="0 0 16 16" fill="#9198a1"><path d="M3.750 2a.75.75 0 0 1 .75.75V7h7V2.750a.75.75 0 0 1 1.500 0v10.500a.75.75 0 0 1-1.500 0V8.500h-7v4.750a.75.75 0 0 1-1.500 0V2.750A.75.75 0 0 1 3.750 2Z"/></svg>
    <svg style="left:208px;top:76px" width="16" height="16" viewBox="0 0 16 16" fill="#9198a1"><path d="M4 2h4.500a3.501 3.501 0 0 1 2.852 5.530A3.499 3.499 0 0 1 9.500 14H4a1 1 0 0 1-1-1V3a1 1 0 0 1 1-1Zm1 7v3h4.500a1.500 1.500 0 0 0 0-3Zm3.500-2a1.500 1.500 0 0 0 0-3H5v3Z"/></svg>
    <svg style="left:240px;top:76px" width="16" height="16" viewBox="0 0 16 16" fill="#9198a1"><path d="M6 2.750A.75.75 0 0 1 6.750 2h6.500a.75.75 0 0 1 0 1.500h-2.505l-3.858 9H9.250a.75.75 0 0 1 0 1.500h-6.500a.75.75 0 0 1 0-1.500h2.505l3.858-9H6.750A.75.75 0 0 1 6 2.750Z"/></svg>
    <svg style="left:272px;top:76px" width="16" height="16" viewBox="0 0 16 16" fill="#9198a1"><path d="M1.750 2.500h10.500a.75.75 0 0 1 0 1.500H1.750a.75.75 0 0 1 0-1.500Zm4 5h8.500a.75.75 0 0 1 0 1.500h-8.500a.75.75 0 0 1 0-1.500Zm0 5h8.500a.75.75 0 0 1 0 1.500h-8.500a.75.75 0 0 1 0-1.500ZM2.500 7.750v6a.75.75 0 0 1-1.500 0v-6a.75.75 0 0 1 1.500 0Z"/></svg>
    <svg style="left:304px;top:76px" width="16" height="16" viewBox="0 0 16 16" fill="#9198a1"><path d="m11.280 3.220 4.250 4.250a.75.75 0 0 1 0 1.060l-4.250 4.250a.749.749 0 0 1-1.275-.326.749.749 0 0 1 .215-.734L13.940 8l-3.720-3.720a.749.749 0 0 1 .326-1.275.749.749 0 0 1 .734.215Zm-6.560 0a.751.751 0 0 1 1.042.018.751.751 0 0 1 .018 1.042L2.060 8l3.720 3.720a.749.749 0 0 1-.326 1.275.749.749 0 0 1-.734-.215L.470 8.530a.75.75 0 0 1 0-1.060Z"/></svg>
    <svg style="left:336px;top:76px" width="16" height="16" viewBox="0 0 16 16" fill="#9198a1"><path d="m7.775 3.275 1.250-1.250a3.500 3.500 0 1 1 4.950 4.950l-2.500 2.500a3.500 3.500 0 0 1-4.950 0 .751.751 0 0 1 .018-1.042.751.751 0 0 1 1.042-.018 1.998 1.998 0 0 0 2.830 0l2.500-2.500a2.002 2.002 0 0 0-2.830-2.830l-1.250 1.250a.751.751 0 0 1-1.042-.018.751.751 0 0 1-.018-1.042Zm-4.690 9.640a1.998 1.998 0 0 0 2.830 0l1.250-1.250a.751.751 0 0 1 1.042.018.751.751 0 0 1 .018 1.042l-1.250 1.250a3.500 3.500 0 1 1-4.950-4.950l2.500-2.500a3.500 3.500 0 0 1 4.950 0 .751.751 0 0 1-.018 1.042.751.751 0 0 1-1.042.018 1.998 1.998 0 0 0-2.830 0l-2.500 2.500a1.998 1.998 0 0 0 0 2.830Z"/></svg>
    <svg style="left:385px;top:76px" width="16" height="16" viewBox="0 0 16 16" fill="#9198a1"><path d="M5 3.250a.75.75 0 0 1 .75-.75h8.500a.75.75 0 0 1 0 1.500h-8.500A.75.75 0 0 1 5 3.250Zm0 5a.75.75 0 0 1 .75-.75h8.500a.75.75 0 0 1 0 1.500h-8.500A.75.75 0 0 1 5 8.250Zm0 5a.75.75 0 0 1 .75-.75h8.500a.75.75 0 0 1 0 1.500h-8.500a.75.75 0 0 1-.75-.75ZM.924 10.320a.5.5 0 0 1-.851-.525l.001-.001.001-.002.002-.004.007-.011c.097-.144.215-.273.348-.384.228-.190.588-.392 1.068-.392.468 0 .858.181 1.126.484.259.294.377.673.377 1.038 0 .987-.686 1.495-1.156 1.845l-.047.035c-.303.225-.522.400-.654.597h1.357a.5.5 0 0 1 0 1H.500a.5.5 0 0 1-.5-.5c0-1.005.692-1.520 1.167-1.873l.030-.022c.502-.373.806-.619.806-1.082a.560.560 0 0 0-.128-.376C1.806 10.068 1.695 10 1.500 10a.658.658 0 0 0-.429.163.835.835 0 0 0-.144.153ZM2.003 2.500V6h.503a.5.5 0 0 1 0 1H.500a.5.5 0 0 1 0-1h.503V3.308l-.280.140a.5.5 0 0 1-.446-.895l1.003-.500a.5.5 0 0 1 .723.447Z"/></svg>
    <svg style="left:417px;top:76px" width="16" height="16" viewBox="0 0 16 16" fill="#9198a1"><path d="M5.750 2.500h8.500a.75.75 0 0 1 0 1.500h-8.500a.75.75 0 0 1 0-1.500Zm0 5h8.500a.75.75 0 0 1 0 1.500h-8.500a.75.75 0 0 1 0-1.500Zm0 5h8.500a.75.75 0 0 1 0 1.500h-8.500a.75.75 0 0 1 0-1.500ZM2 14a1 1 0 1 1 0-2 1 1 0 0 1 0 2Zm1-6a1 1 0 1 1-2 0 1 1 0 0 1 2 0ZM2 4a1 1 0 1 1 0-2 1 1 0 0 1 0 2Z"/></svg>
    <svg style="left:449px;top:76px" width="16" height="16" viewBox="0 0 16 16" fill="#9198a1"><path d="M2 2h4a1 1 0 0 1 1 1v4a1 1 0 0 1-1 1H2a1 1 0 0 1-1-1V3a1 1 0 0 1 1-1Zm4.655 8.595a.75.75 0 0 1 0 1.060L4.030 14.280a.75.75 0 0 1-1.060 0l-1.500-1.500a.749.749 0 0 1 .326-1.275.749.749 0 0 1 .734.215l.970.970 2.095-2.095a.75.75 0 0 1 1.060 0ZM9.750 2.500h5.500a.75.75 0 0 1 0 1.500h-5.500a.75.75 0 0 1 0-1.500Zm0 5h5.500a.75.75 0 0 1 0 1.500h-5.500a.75.75 0 0 1 0-1.500Zm0 5h5.500a.75.75 0 0 1 0 1.500h-5.500a.75.75 0 0 1 0-1.500Zm-7.250-9v3h3v-3Z"/></svg>
    <svg style="left:498px;top:76px" width="16" height="16" viewBox="0 0 16 16" fill="#9198a1"><path d="M12.212 3.020a1.753 1.753 0 0 0-2.478.003l-5.830 5.830a3.007 3.007 0 0 0-.880 2.127c0 .795.315 1.551.880 2.116.567.567 1.333.890 2.126.890.790 0 1.548-.321 2.116-.890l5.480-5.480a.75.75 0 0 1 1.061 1.060l-5.480 5.480a4.492 4.492 0 0 1-3.177 1.330c-1.200 0-2.345-.487-3.187-1.330a4.483 4.483 0 0 1-1.320-3.177c0-1.195.475-2.341 1.320-3.186l5.830-5.830a3.250 3.250 0 0 1 5.553 2.297c0 .863-.343 1.691-.953 2.301L7.439 12.390c-.375.377-.884.590-1.416.593a1.998 1.998 0 0 1-1.412-.593 1.992 1.992 0 0 1 0-2.828l5.480-5.480a.751.751 0 0 1 1.042.018.751.751 0 0 1 .018 1.042l-5.480 5.480a.492.492 0 0 0 0 .707.499.499 0 0 0 .352.154.510.510 0 0 0 .356-.154l5.833-5.827a1.755 1.755 0 0 0 0-2.481Z"/></svg>
    <svg style="left:530px;top:76px" width="16" height="16" viewBox="0 0 16 16" fill="#9198a1"><path d="M4.750 2.370a6.501 6.501 0 0 0 6.500 11.260.75.75 0 0 1 .75 1.298A7.999 7.999 0 0 1 .989 4.148 8 8 0 0 1 16 7.750v1.500a2.750 2.750 0 0 1-5.072 1.475 3.999 3.999 0 0 1-6.650-4.190A4 4 0 0 1 12 8v1.250a1.250 1.250 0 0 0 2.500 0V7.867a6.500 6.500 0 0 0-9.750-5.496ZM10.500 8a2.500 2.500 0 1 0-5 0 2.500 2.500 0 0 0 5 0Z"/></svg>
    <svg style="left:562px;top:76px" width="16" height="16" viewBox="0 0 16 16" fill="#9198a1"><path d="M2.750 3.500a.25.25 0 0 0-.25.25v7.500c0 .138.112.25.25.25h2a.75.75 0 0 1 .75.75v2.190l2.720-2.720a.749.749 0 0 1 .530-.220h4.500a.25.25 0 0 0 .250-.250v-2.500a.75.75 0 0 1 1.500 0v2.500A1.750 1.750 0 0 1 13.250 13H9.060l-2.573 2.573A1.458 1.458 0 0 1 4 14.543V13H2.750A1.750 1.750 0 0 1 1 11.250v-7.500C1 2.784 1.784 2 2.750 2h5.500a.75.75 0 0 1 0 1.500ZM16 1.250v4.146a.25.25 0 0 1-.427.177L14.030 4.030l-3.750 3.750a.749.749 0 0 1-1.275-.326.749.749 0 0 1 .215-.734l3.750-3.750-1.543-1.543A.25.25 0 0 1 11.604 1h4.146a.25.25 0 0 1 .250.250Z"/></svg>
    <svg style="left:594px;top:76px" width="16" height="16" viewBox="0 0 16 16" fill="#9198a1"><path d="M6.780 1.970a.75.75 0 0 1 0 1.060L3.810 6h6.440A4.750 4.750 0 0 1 15 10.750v2.500a.75.75 0 0 1-1.500 0v-2.500a3.250 3.250 0 0 0-3.250-3.250H3.810l2.970 2.970a.749.749 0 0 1-.326 1.275.749.749 0 0 1-.734-.215L1.470 7.280a.75.75 0 0 1 0-1.060l4.250-4.250a.75.75 0 0 1 1.060 0Z"/></svg>
  <div class="abs" style="left:368px;top:76px;width:1px;height:16px;background:#3d444d"></div>
  <div class="abs" style="left:481px;top:76px;width:1px;height:16px;background:#3d444d"></div>
  <!-- textarea -->
  <div class="abs" id="ta" style="left:23px;top:111px;width:592px;height:106px;border:2px solid #1f6feb;border-radius:6px;background:#0d1117"></div>
  <div class="abs" style="left:33px;top:123px;width:1px;height:17px;background:#f0f6fc"></div>
  <div class="abs" id="p-ph" style="-webkit-text-stroke:0.2px;left:33.0px;top:122px;font-size:14px;line-height:20px;color:#9198a1;letter-spacing:0.072px">Leave a comment</div>
  <svg style="left:603px;top:205px" width="9" height="9" viewBox="0 0 9 9" stroke="#9198a1" stroke-width="1" fill="none"><path d="M8.500 1 1 8.500M8.500 5 5 8.500"/></svg>
  <!-- editor footer -->
  <svg style="left:33px;top:230px" width="16" height="16" viewBox="0 0 16 16" fill="#9198a1"><path d="M14.850 3c.630 0 1.150.520 1.140 1.150v7.700c0 .630-.510 1.150-1.150 1.150H1.150C.520 13 0 12.480 0 11.840V4.150C0 3.520.520 3 1.150 3ZM9 11V5H7L5.500 7 4 5H2v6h2V8l1.500 1.920L7 8v3Zm2.990.5L14.500 8H13V5h-2v3H9.500Z"/></svg>
  <div class="abs" id="p-md" style="left:53.0px;top:229px;font-size:12.5px;line-height:18px;font-weight:bold;color:#f0f6fc;letter-spacing:-0.240px">Markdown is supported</div>
  <div class="abs" style="left:206px;top:224px;width:1px;height:28px;background:#3d444d"></div>
  <svg style="left:223px;top:230px" width="16" height="16" viewBox="0 0 16 16" fill="#9198a1"><path d="M16 13.250A1.750 1.750 0 0 1 14.250 15H1.750A1.750 1.750 0 0 1 0 13.250V2.750C0 1.784.784 1 1.750 1h12.500c.966 0 1.750.784 1.750 1.750ZM1.750 2.500a.25.25 0 0 0-.25.25v10.500c0 .138.112.25.25.25h.940l.030-.030 6.077-6.078a1.750 1.750 0 0 1 2.412-.060L14.500 10.310V2.750a.25.25 0 0 0-.25-.25Zm12.500 11a.25.25 0 0 0 .25-.25v-.917l-4.298-3.889a.25.25 0 0 0-.344.009L4.810 13.500ZM7 6a2 2 0 1 1-3.999.001A2 2 0 0 1 7 6ZM5.500 6a.5.5 0 1 0-1 0 .5.5 0 0 0 1 0Z"/></svg>
  <div class="abs" id="p-paste" style="left:242.6px;top:229px;font-size:12.5px;line-height:18px;font-weight:bold;color:#f0f6fc;letter-spacing:-0.140px">Paste, drop, or click to add files</div>
  <!-- radios -->
  <div class="rad" style="top:279px;border:4px solid #1f6feb;background:#0d1117"></div>
  <div class="t" id="o1" style="top:277px;color:#f0f6fc;letter-spacing:0.136px">Comment</div>
  <div class="d" id="d1" style="top:300px;letter-spacing:0.188px">Submit general feedback without explicit approval.</div>
  <div class="rad" style="top:327px;border:1px solid #222830;background:#1e242c"></div>
  <div class="t" id="o2" style="top:325px;color:#656c76;letter-spacing:0.066px">Approve</div>
  <div class="d" id="d2" style="top:348px;letter-spacing:0.152px">Pull request authors can&rsquo;t approve their own pull request.</div>
  <div class="rad" style="top:375px;border:1px solid #222830;background:#1e242c"></div>
  <div class="t" id="o3" style="top:373px;color:#656c76;letter-spacing:0.087px">Request changes</div>
  <div class="d" id="d3" style="top:396px;letter-spacing:0.153px">Pull request authors can&rsquo;t request changes on their own pull request.</div>
  <div class="abs" style="left:-1px;top:429px;width:640px;height:1px;background:#3d444d"></div>
  <div class="btn" style="left:523px;top:445px;width:100px;background:#238636;border-color:#2a8a3e;color:#fff"><span class="abs" id="x-sub" style="left:7.6px;top:0;letter-spacing:-0.001px">Submit review</span></div>
</div>
</div>
</body>
</html>
